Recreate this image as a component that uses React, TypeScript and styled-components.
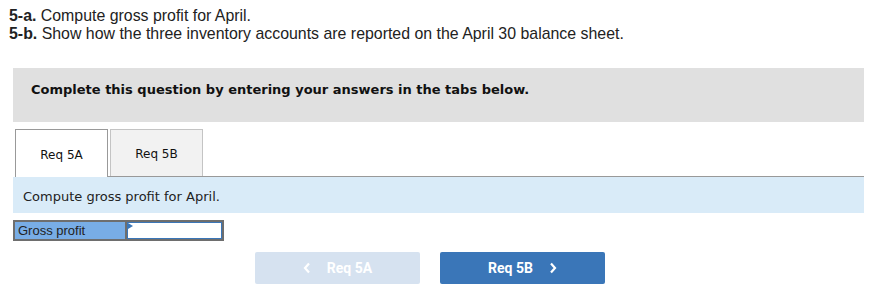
import React from 'react';
import styled, { createGlobalStyle } from 'styled-components';

const GlobalStyle = createGlobalStyle`
  body {
    margin: 0;
    background: #fff;
    font-family: "Liberation Sans", Arial, sans-serif;
  }
`;

const Page = styled.div`
  width: 880px;
  height: 300px;
  overflow: hidden;
  padding: 7px 0 0 0;
  box-sizing: border-box;
`;

const Prompt = styled.div`
  padding-left: 9px;
  font-size: 15.9px;
  line-height: 18px;
  color: #222;
`;

const Label = styled.b`
  font-weight: bold;
`;

const Notice = styled.div`
  margin: 25px 16px 0 13px;
  height: 54px;
  box-sizing: border-box;
  background: #e0e0e0;
  display: flex;
  align-items: flex-start;
  padding: 14px 0 0 18px;
  font-family: Verdana, "DejaVu Sans", sans-serif;
  font-size: 13px;
  font-weight: bold;
  color: #111;
`;

const Tabs = styled.div`
  display: flex;
  margin: 7px 16px 0 15px;
  border-bottom: 1px solid #999;
  gap: 2px;
`;

const Tab = styled.div<{ $active?: boolean }>`
  width: 93px;
  box-sizing: border-box;
  display: flex;
  align-items: center;
  justify-content: center;
  padding-top: 2px;
  font-family: Verdana, "DejaVu Sans", sans-serif;
  font-size: 12px;
  color: #111;
  background: ${(p) => (p.$active ? '#fff' : '#f2f2f2')};
  border: 1px solid ${(p) => (p.$active ? '#999' : '#c4c4c4')};
  border-bottom: none;
  margin-bottom: ${(p) => (p.$active ? '-1px' : '0')};
  height: ${(p) => (p.$active ? '48px' : '47px')};
`;

const Instruction = styled.div`
  margin: 0 16px 0 13px;
  height: 36px;
  box-sizing: border-box;
  background: #d9ebf8;
  display: flex;
  align-items: center;
  padding: 2px 0 0 10px;
  font-family: Verdana, "DejaVu Sans", sans-serif;
  font-size: 13px;
  color: #222;
`;

const AnswerRow = styled.div`
  display: flex;
  margin: 7px 0 0 13px;
  height: 21px;
`;

const RowLabel = styled.div`
  width: 113px;
  box-sizing: border-box;
  background: #78ade6;
  border: 2px solid #6e6e6e;
  border-right: 1px solid #6e6e6e;
  font-size: 13px;
  color: #222;
  padding-left: 3px;
  display: flex;
  align-items: center;
`;

const InputCell = styled.div`
  position: relative;
  width: 98px;
  box-sizing: border-box;
  border: 2px solid #6e6e6e;
  border-left: 1px solid #6e6e6e;
  background: #fff;
`;

const InputInner = styled.input`
  width: 100%;
  height: 100%;
  box-sizing: border-box;
  border: 1px solid #3a76b8;
  outline: none;
  margin: 0;
  padding: 0;
  display: block;
`;

const Marker = styled.span`
  position: absolute;
  left: 1px;
  top: 1px;
  width: 0;
  height: 0;
  border-top: 3px solid transparent;
  border-bottom: 3px solid transparent;
  border-left: 5px solid #3a76b8;
`;

const NavRow = styled.div`
  display: flex;
  gap: 20px;
  margin: 11px 0 0 255px;
`;

const NavButton = styled.div<{ $disabled?: boolean }>`
  width: 165px;
  height: 32px;
  border-radius: 2px;
  display: flex;
  align-items: center;
  justify-content: center;
  gap: 16px;
  font-family: "Roboto", "Liberation Sans", sans-serif;
  font-weight: bold;
  font-size: 14px;
  color: #fff;
  background: ${(p) => (p.$disabled ? '#d6e2f0' : '#3a76b8')};
`;

const Chevron = ({ dir }: { dir: 'left' | 'right' }) => (
  <svg width="8" height="12" viewBox="0 0 8 12">
    <path
      d={dir === 'left' ? 'M6 1.5 L2 6 L6 10.5' : 'M2 1.5 L6 6 L2 10.5'}
      fill="none"
      stroke="#fff"
      strokeWidth="2.2"
    />
  </svg>
);

const App: React.FC = () => {
  return (
    <Page>
      <GlobalStyle />
      <Prompt>
        <Label>5-a.</Label> Compute gross profit for April.
        <br />
        <Label>5-b.</Label> Show how the three inventory accounts are reported on the April 30 balance sheet.
      </Prompt>

      <Notice>Complete this question by entering your answers in the tabs below.</Notice>

      <Tabs>
        <Tab $active>Req 5A</Tab>
        <Tab>Req 5B</Tab>
      </Tabs>

      <Instruction>Compute gross profit for April.</Instruction>

      <AnswerRow>
        <RowLabel>Gross profit</RowLabel>
        <InputCell>
          <InputInner />
          <Marker />
        </InputCell>
      </AnswerRow>

      <NavRow>
        <NavButton $disabled>
          <Chevron dir="left" />
          <span>Req 5A</span>
        </NavButton>
        <NavButton>
          <span>Req 5B</span>
          <Chevron dir="right" />
        </NavButton>
      </NavRow>
    </Page>
  );
};

export default App;
